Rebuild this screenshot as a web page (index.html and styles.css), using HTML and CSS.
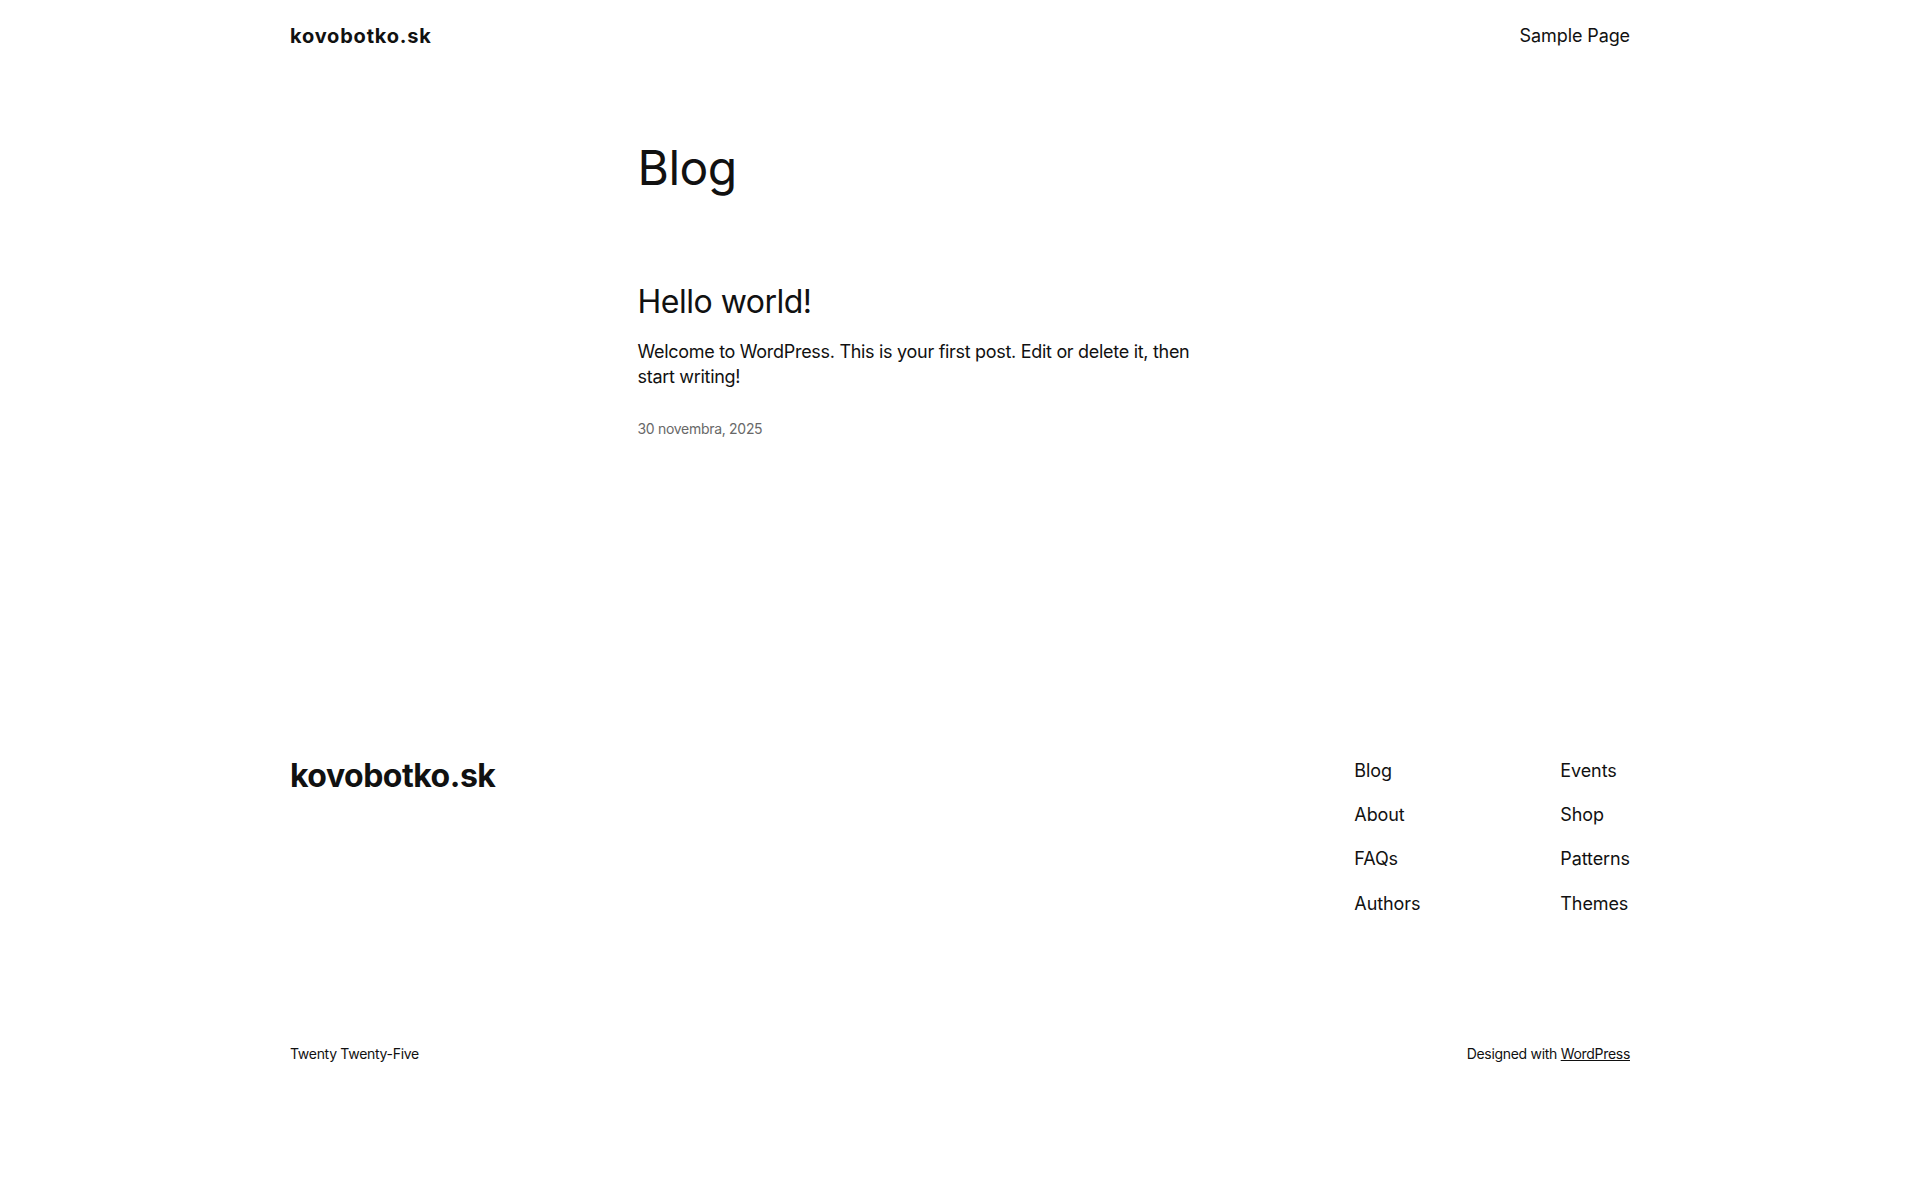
FILE: index.html
```html
<!DOCTYPE html>
<html lang="sk">
<head>
    <meta charset="UTF-8">
    <meta name="viewport" content="width=device-width, initial-scale=1.0">
    <title>Blog – kovobotko.sk</title>
    <link rel="stylesheet" href="styles.css">
</head>
<body>
    <header class="site-header">
        <a class="site-title" href="#">kovobotko.sk</a>
        <nav class="header-nav">
            <a href="#">Sample Page</a>
        </nav>
    </header>

    <main class="site-main">
        <h1 class="page-title">Blog</h1>

        <article class="post">
            <h2 class="post-title"><a href="#">Hello world!</a></h2>
            <p class="post-excerpt">Welcome to WordPress. This is your first post. Edit or delete it, then start writing!</p>
            <time class="post-date" datetime="2025-11-30">30 novembra, 2025</time>
        </article>
    </main>

    <footer class="site-footer">
        <div class="footer-top">
            <a class="footer-title" href="#">kovobotko.sk</a>
            <div class="footer-nav">
                <nav class="footer-col">
                    <a href="#">Blog</a>
                    <a href="#">About</a>
                    <a href="#">FAQs</a>
                    <a href="#">Authors</a>
                </nav>
                <nav class="footer-col">
                    <a href="#">Events</a>
                    <a href="#">Shop</a>
                    <a href="#">Patterns</a>
                    <a href="#">Themes</a>
                </nav>
            </div>
        </div>
        <div class="footer-bottom">
            <span>Twenty Twenty-Five</span>
            <span>Designed with <a href="#">WordPress</a></span>
        </div>
    </footer>
</body>
</html>
```

FILE: styles.css
```css
body {
    margin: 0;
    font-family: Inter, 'Noto Sans', sans-serif;
    font-size: 18px;
    line-height: 1.4;
    letter-spacing: -0.1px;
    color: #111111;
    background-color: #ffffff;
}
a {
    color: inherit;
    text-decoration: none;
}
.site-header {
    max-width: 1340px;
    margin: 0 auto;
    padding: 22px 0;
    display: flex;
    justify-content: space-between;
    align-items: center;
}
.site-title {
    font-size: 20px;
    font-weight: 700;
    letter-spacing: 0.8px;
}
.header-nav {
    font-size: 18px;
}
.site-main {
    width: 645px;
    margin: 0 auto;
    padding-top: 69px;
    min-height: 617px;
}
.page-title {
    font-size: 48px;
    font-weight: 400;
    line-height: 1.125;
    letter-spacing: -0.5px;
    margin: 0 0 89px;
}
.post-title {
    font-size: 32px;
    font-weight: 400;
    line-height: 1.125;
    letter-spacing: -0.5px;
    margin: 0 0 19px;
}
.post-excerpt {
    max-width: 580px;
    margin: 0 0 30px;
    letter-spacing: -0.3px;
}
.post-date {
    display: block;
    font-size: 14px;
    letter-spacing: -0.3px;
    color: #686868;
}
.site-footer {
    max-width: 1340px;
    margin: 0 auto;
}
.footer-top {
    display: flex;
    justify-content: space-between;
    align-items: flex-start;
    min-height: 286px;
}
.footer-title {
    font-size: 32px;
    font-weight: 700;
    line-height: 1.125;
    letter-spacing: -0.5px;
}
.footer-nav {
    display: flex;
}
.footer-col {
    display: flex;
    flex-direction: column;
    gap: 19px;
}
.footer-col:first-child {
    width: 206px;
}
.footer-bottom {
    display: flex;
    justify-content: space-between;
    font-size: 14px;
    letter-spacing: -0.3px;
    padding-bottom: 120px;
}
.footer-bottom a {
    text-decoration: underline;
}
```
